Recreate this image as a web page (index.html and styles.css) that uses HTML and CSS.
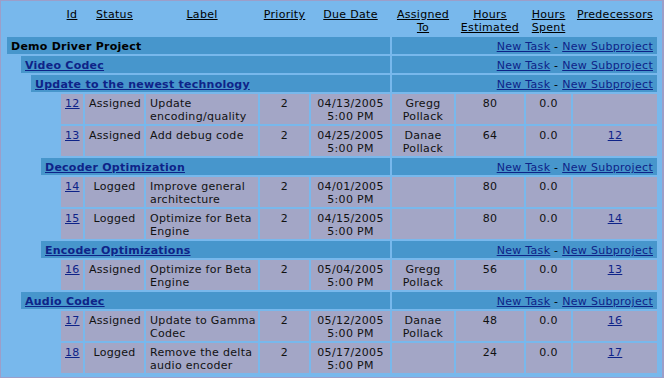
FILE: index.html
```html
<!DOCTYPE html>
<html>
<head>
<meta charset="utf-8">
<title>Demo Driver Project</title>
<link rel="stylesheet" href="styles.css">
</head>
<body>
<div class="tree">
  <div class="th first"><a href="#">Id</a></div>
  <div class="th"><a href="#">Status</a></div>
  <div class="th"><a href="#">Label</a></div>
  <div class="th"><a href="#">Priority</a></div>
  <div class="th"><a href="#">Due Date</a></div>
  <div class="th"><a href="#">Assigned To</a></div>
  <div class="th"><a href="#">Hours Estimated</a></div>
  <div class="th"><a href="#">Hours Spent</a></div>
  <div class="th"><a href="#">Predecessors</a></div>

  <div class="bar lvl0">Demo Driver Project</div>
  <div class="actions"><a href="#">New Task</a> - <a href="#">New Subproject</a></div>

  <div class="bar lvl1"><a href="#">Video Codec</a></div>
  <div class="actions"><a href="#">New Task</a> - <a href="#">New Subproject</a></div>

  <div class="bar lvl2"><a href="#">Update to the newest technology</a></div>
  <div class="actions"><a href="#">New Task</a> - <a href="#">New Subproject</a></div>

  <div class="td id"><a href="#">12</a></div>
  <div class="td">Assigned</div>
  <div class="td label">Update encoding/quality</div>
  <div class="td">2</div>
  <div class="td">04/13/2005<br>5:00 PM</div>
  <div class="td">Gregg Pollack</div>
  <div class="td">80</div>
  <div class="td">0.0</div>
  <div class="td"></div>

  <div class="td id"><a href="#">13</a></div>
  <div class="td">Assigned</div>
  <div class="td label">Add debug code</div>
  <div class="td">2</div>
  <div class="td">04/25/2005<br>5:00 PM</div>
  <div class="td">Danae Pollack</div>
  <div class="td">64</div>
  <div class="td">0.0</div>
  <div class="td"><a href="#">12</a></div>

  <div class="bar lvl3"><a href="#">Decoder Optimization</a></div>
  <div class="actions"><a href="#">New Task</a> - <a href="#">New Subproject</a></div>

  <div class="td id"><a href="#">14</a></div>
  <div class="td">Logged</div>
  <div class="td label">Improve general architecture</div>
  <div class="td">2</div>
  <div class="td">04/01/2005<br>5:00 PM</div>
  <div class="td"></div>
  <div class="td">80</div>
  <div class="td">0.0</div>
  <div class="td"></div>

  <div class="td id"><a href="#">15</a></div>
  <div class="td">Logged</div>
  <div class="td label">Optimize for Beta Engine</div>
  <div class="td">2</div>
  <div class="td">04/15/2005<br>5:00 PM</div>
  <div class="td"></div>
  <div class="td">80</div>
  <div class="td">0.0</div>
  <div class="td"><a href="#">14</a></div>

  <div class="bar lvl3"><a href="#">Encoder Optimizations</a></div>
  <div class="actions"><a href="#">New Task</a> - <a href="#">New Subproject</a></div>

  <div class="td id"><a href="#">16</a></div>
  <div class="td">Assigned</div>
  <div class="td label">Optimize for Beta Engine</div>
  <div class="td">2</div>
  <div class="td">05/04/2005<br>5:00 PM</div>
  <div class="td">Gregg Pollack</div>
  <div class="td">56</div>
  <div class="td">0.0</div>
  <div class="td"><a href="#">13</a></div>

  <div class="bar lvl1"><a href="#">Audio Codec</a></div>
  <div class="actions"><a href="#">New Task</a> - <a href="#">New Subproject</a></div>

  <div class="td id"><a href="#">17</a></div>
  <div class="td">Assigned</div>
  <div class="td label">Update to Gamma Codec</div>
  <div class="td">2</div>
  <div class="td">05/12/2005<br>5:00 PM</div>
  <div class="td">Danae Pollack</div>
  <div class="td">48</div>
  <div class="td">0.0</div>
  <div class="td"><a href="#">16</a></div>

  <div class="td id"><a href="#">18</a></div>
  <div class="td">Logged</div>
  <div class="td label">Remove the delta audio encoder</div>
  <div class="td">2</div>
  <div class="td">05/17/2005<br>5:00 PM</div>
  <div class="td"></div>
  <div class="td">24</div>
  <div class="td">0.0</div>
  <div class="td"><a href="#">17</a></div>
</div>
</body>
</html>
```
FILE: styles.css
```css
html, body {
  margin: 0;
  padding: 0;
}
body {
  background: #78b8ec;
  border: 1px solid #9c9ec9;
  border-right-width: 2px;
  height: 378px;
  box-sizing: border-box;
  font-family: Verdana, "DejaVu Sans", sans-serif;
  font-size: 11px;
  line-height: 13px;
  letter-spacing: 0.3px;
  color: #000;
  overflow: hidden;
}
a {
  color: #0e2388;
  text-decoration: underline;
}
.tree {
  display: grid;
  grid-template-columns: 12px 8px 8px 18px 22px 59px 112px 49px 79px 62px 68px 45px 84px;
  gap: 2px;
  padding: 4px 0 0 6px;
}
.th {
  padding: 3px 0 1px;
  text-align: center;
}
.th a {
  color: #000;
}
.th.first {
  grid-column-start: 5;
}
.bar,
.actions {
  background: #4796cc;
  padding: 3px 4px 1px;
}
.bar {
  font-weight: bold;
  letter-spacing: 0.25px;
  white-space: nowrap;
}
.lvl0 { grid-column: 1 / 10; }
.lvl1 { grid-column: 2 / 10; }
.lvl2 { grid-column: 3 / 10; }
.lvl3 { grid-column: 4 / 10; }
.actions {
  grid-column: 10 / 14;
  text-align: right;
  white-space: nowrap;
}
.td {
  background: #a3a6c6;
  padding: 3px 4px 1px;
  text-align: center;
  color: #111;
}
.td.id {
  grid-column-start: 5;
  text-align: left;
}
.td.label {
  text-align: left;
  padding-right: 0;
}
```
